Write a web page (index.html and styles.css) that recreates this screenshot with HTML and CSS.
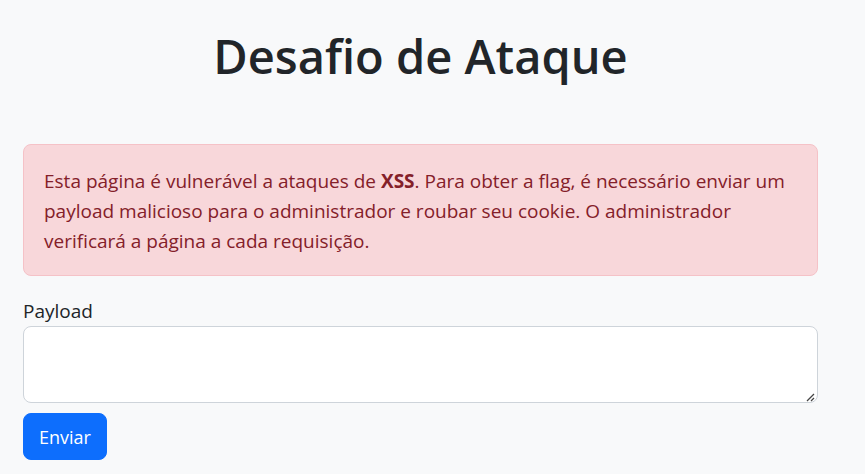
FILE: index.html
```html
<!DOCTYPE html>
<html lang="pt-BR">
<head>
<meta charset="utf-8">
<meta name="viewport" content="width=device-width, initial-scale=1">
<title>Desafio de Ataque</title>
<link rel="stylesheet" href="styles.css">
</head>
<body>
<main class="container">
  <h1 class="title">Desafio de Ataque</h1>
  <div class="alert" role="alert">Esta página é vulnerável a ataques de <strong>XSS</strong>. Para obter a flag, é necessário enviar um payload malicioso para o administrador e roubar seu cookie. O administrador verificará a página a cada requisição.</div>
  <form class="form">
    <label for="payload">Payload</label>
    <div class="field-wrap">
      <textarea class="field" id="payload" name="payload" rows="2"></textarea>
      <svg class="grip" viewBox="0 0 10 10" aria-hidden="true"><path d="M1 9 8 2M5 9 8 6"/></svg>
    </div>
    <button class="button" type="submit">Enviar</button>
  </form>
</main>
</body>
</html>
```
FILE: styles.css
```css
* {
  box-sizing: border-box;
}

body {
  margin: 0;
  background: #f8f9fa;
  color: #212529;
  font-family: "Segoe UI", "Open Sans", "Noto Sans", sans-serif;
  font-size: 19px;
  line-height: 30px;
}

.container {
  padding: 26px 47px 14px 23px;
}

.title {
  margin: 0 0 58px;
  font-size: 47px;
  font-weight: 600;
  line-height: 60px;
  text-align: center;
}

.alert {
  margin-bottom: 20px;
  padding: 21px 20px 19px;
  border: 1px solid #f5c2c7;
  border-radius: 8px;
  background: #f8d7da;
  color: #842029;
}

.form {
  display: flex;
  flex-direction: column;
  align-items: flex-start;
}

.field-wrap {
  position: relative;
  width: 100%;
}

.field {
  display: block;
  width: 100%;
  height: 77px;
  padding: 8px 16px;
  border: 1px solid #ced4da;
  border-radius: 8px;
  background: #fff;
  color: inherit;
  font: inherit;
  resize: vertical;
}

.field::-webkit-resizer {
  background: transparent;
}

/* Resize handle drawn over the corner of the text area */
.grip {
  position: absolute;
  right: 2px;
  bottom: 1px;
  width: 10px;
  height: 10px;
  fill: none;
  stroke: #444;
  stroke-width: 1.3;
  pointer-events: none;
}

.button {
  margin-top: 10px;
  padding: 8px 15px 7px;
  border: 1px solid #0d6efd;
  border-radius: 8px;
  background: #0d6efd;
  color: #fff;
  font: inherit;
  font-size: 18px;
}
```
